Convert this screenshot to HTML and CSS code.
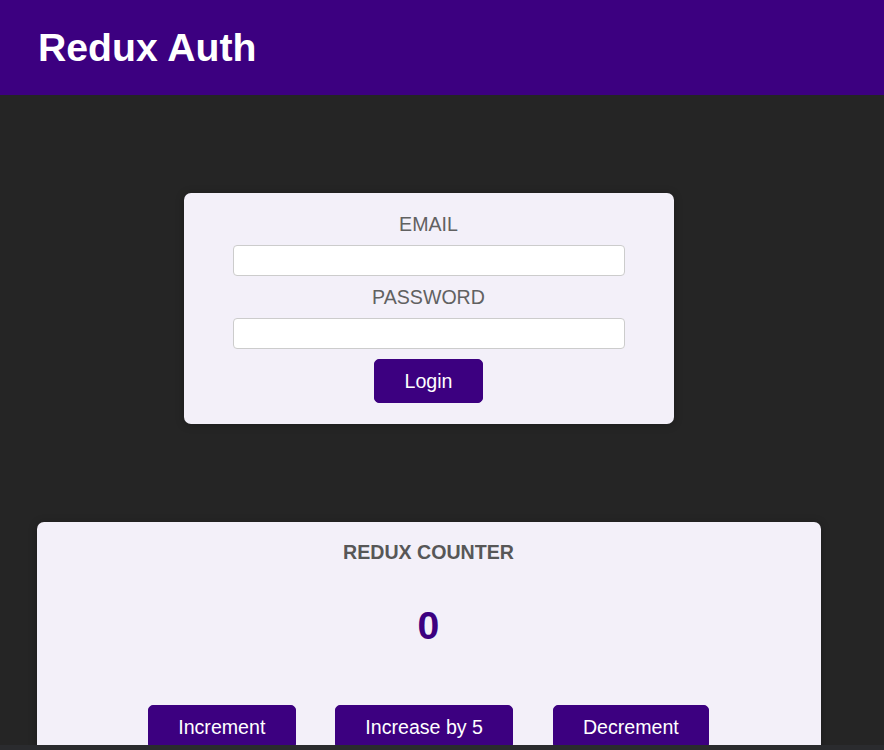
FILE: index.html
```html
<!DOCTYPE html>
<html lang="en">
<head>
<meta charset="utf-8">
<title>Redux Auth</title>
<link rel="stylesheet" href="styles.css">
</head>
<body>
<header class="header">
  <h1 class="header-title">Redux Auth</h1>
</header>
<main class="main">
  <section class="auth">
    <form class="auth-form">
      <div class="control">
        <label class="control-label" for="email">Email</label>
        <input class="control-input" type="email" id="email">
      </div>
      <div class="control">
        <label class="control-label" for="password">Password</label>
        <input class="control-input" type="password" id="password">
      </div>
      <button class="btn" type="button">Login</button>
    </form>
  </section>
  <section class="counter">
    <h1 class="counter-title">Redux Counter</h1>
    <div class="counter-value">0</div>
    <div class="counter-actions">
      <button class="btn" type="button">Increment</button>
      <button class="btn" type="button">Increase by 5</button>
      <button class="btn" type="button">Decrement</button>
    </div>
  </section>
</main>
<div class="bottom-strip"></div>
</body>
</html>
```

FILE: styles.css
```css
* {
  box-sizing: border-box;
}

html, body {
  margin: 0;
  padding: 0;
}

body {
  background: #252525;
  font-family: "Liberation Sans", Arial, sans-serif;
  font-size: 19.6px;
  height: 750px;
  overflow: hidden;
}

.header {
  height: 95px;
  background: #3c0080;
  display: flex;
  align-items: center;
  padding-left: 38px;
}

.header-title {
  margin: 0;
  color: #ffffff;
  font-size: 39.2px;
  font-weight: bold;
}

.main {
  width: 857px;
}

.auth {
  width: 490px;
  margin: 98px auto;
  background: #f3f0f9;
  border-radius: 7px;
  box-shadow: 0 1px 8px rgba(0, 0, 0, 0.25);
  padding: 19.6px 19.6px 21px;
  text-align: center;
}

.auth-form {
  margin: 0;
}

.control {
  margin-bottom: 9.8px;
}

.control-label {
  display: block;
  color: #616161;
  text-transform: uppercase;
  margin-bottom: 9.8px;
  line-height: 22.5px;
}

.control-input {
  display: block;
  width: 392px;
  height: 31px;
  margin: 0 auto;
  border: 1px solid #cccccc;
  border-radius: 4px;
  background: #ffffff;
  font: inherit;
}

.btn {
  font: inherit;
  line-height: 22.5px;
  color: #ffffff;
  background: #3c0080;
  border: 1px solid #3c0080;
  border-radius: 5px;
  padding: 9.8px 29.4px;
  cursor: pointer;
}

.counter {
  width: 784px;
  margin: 98px auto;
  background: #f3f0f9;
  border-radius: 7px;
  box-shadow: 0 1px 8px rgba(0, 0, 0, 0.25);
  padding: 19.6px;
  text-align: center;
}

.counter-title {
  margin: 0;
  font-size: 19.6px;
  line-height: 22.5px;
  text-transform: uppercase;
  color: #575757;
}

.counter-value {
  font-size: 39.2px;
  line-height: 45px;
  font-weight: bold;
  color: #3c0080;
  margin: 39.2px 0;
}

.counter-actions {
  padding-top: 18px;
  display: flex;
  justify-content: center;
  gap: 39.2px;
}

.bottom-strip {
  position: fixed;
  left: 0;
  right: 0;
  bottom: 0;
  height: 5px;
  background: #2a2b2e;
}
```
